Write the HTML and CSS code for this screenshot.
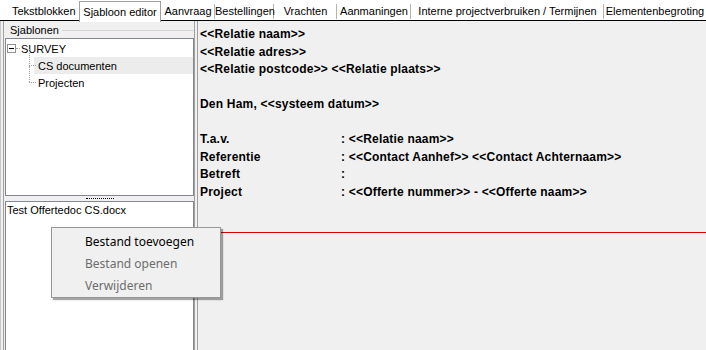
FILE: index.html
```html
<!DOCTYPE html>
<html lang="nl">
<head>
    <meta charset="UTF-8">
    <title>Sjabloon editor</title>
    <link rel="stylesheet" href="styles.css">
</head>
<body>
    <div class="tabs">
        <div class="tab tab-first">Tekstblokken</div>
        <div class="tab tab-active">Sjabloon editor</div>
        <div class="tab w54">Aanvraag</div>
        <div class="tab w59">Bestellingen</div>
        <div class="tab w63">Vrachten</div>
        <div class="tab w74">Aanmaningen</div>
        <div class="tab w193">Interne projectverbruiken / Termijnen</div>
        <div class="tab w102">Elementenbegroting</div>
    </div>

    <div class="main">
        <div class="left">
            <div class="group-title"><span>Sjablonen</span></div>
            <div class="tree">
                <div class="tree-row">
                    <span class="expander"></span>
                    <span class="dots-h short"></span>
                    <span class="tree-text">SURVEY</span>
                </div>
                <div class="tree-row child selected">
                    <span class="dots-v"></span>
                    <span class="dots-h"></span>
                    <span class="tree-text">CS documenten</span>
                </div>
                <div class="tree-row child last">
                    <span class="dots-v"></span>
                    <span class="dots-h"></span>
                    <span class="tree-text">Projecten</span>
                </div>
            </div>
            <div class="splitter"><span class="grip"></span></div>
            <div class="files">
                <div class="file-row">Test Offertedoc CS.docx</div>
            </div>
        </div>
        <div class="divider"></div>
        <div class="editor">
            <div class="line">&lt;&lt;Relatie naam&gt;&gt;</div>
            <div class="line">&lt;&lt;Relatie adres&gt;&gt;</div>
            <div class="line">&lt;&lt;Relatie postcode&gt;&gt; &lt;&lt;Relatie plaats&gt;&gt;</div>
            <div class="line"></div>
            <div class="line">Den Ham, &lt;&lt;systeem datum&gt;&gt;</div>
            <div class="line"></div>
            <div class="line field"><span class="key">T.a.v.</span><span>: &lt;&lt;Relatie naam&gt;&gt;</span></div>
            <div class="line field"><span class="key">Referentie</span><span>: &lt;&lt;Contact Aanhef&gt;&gt; &lt;&lt;Contact Achternaam&gt;&gt;</span></div>
            <div class="line field"><span class="key">Betreft</span><span>:</span></div>
            <div class="line field"><span class="key">Project</span><span>: &lt;&lt;Offerte nummer&gt;&gt; - &lt;&lt;Offerte naam&gt;&gt;</span></div>
            <div class="page-break"></div>
        </div>
    </div>

    <div class="context-menu">
        <div class="menu-item">Bestand toevoegen</div>
        <div class="menu-item disabled">Bestand openen</div>
        <div class="menu-item disabled">Verwijderen</div>
    </div>
</body>
</html>
```

FILE: styles.css
```css
body {
    margin: 0;
    width: 706px;
    height: 350px;
    overflow: hidden;
    background-color: #f0f0f0;
    font-family: "Liberation Sans", Arial, sans-serif;
    font-size: 11px;
    color: #000;
}
.tabs {
    display: flex;
    height: 20px;
    background-color: #fff;
    border-bottom: 1px solid #000;
}
.tab {
    height: 20px;
    line-height: 22px;
    text-align: center;
    white-space: nowrap;
    box-sizing: border-box;
    position: relative;
}
.tab-first {
    width: 79px;
    padding-left: 12px;
    text-align: left;
}
.tab-active {
    width: 82px;
    height: 21px;
    margin-top: 1px;
    line-height: 20px;
    border: 1px solid #a0a0a0;
    border-bottom: none;
    background-color: #fff;
    z-index: 1;
}
.w54 { width: 54px; }
.w59 { width: 59px; }
.w63 { width: 63px; }
.w74 { width: 74px; }
.w193 { width: 193px; }
.w102 { width: 102px; }
.tab.w54, .tab.w59, .tab.w63, .tab.w74, .tab.w193 {
    background-image: linear-gradient(#b4b4b4, #b4b4b4);
    background-size: 1px 15px;
    background-position: right 4px;
    background-repeat: no-repeat;
}
.main {
    display: flex;
    height: 329px;
}
.left {
    width: 194px;
    display: flex;
    flex-direction: column;
    border-left: 1px solid #c8c8c8;
    box-sizing: border-box;
    padding-left: 2px;
    box-shadow: inset 2px 0 0 #f0f0f0, inset 3px 0 0 #a0a0a0;
}
.group-title {
    height: 17px;
    padding-left: 7px;
    line-height: 20px;
    display: flex;
    align-items: center;
    gap: 3px;
}
.group-title::after {
    content: "";
    flex: 1;
    border-top: 1px solid #d5d5d5;
    margin-top: 2px;
}
.tree {
    height: 158px;
    margin-left: 2px;
    border: 1px solid #828790;
    box-sizing: border-box;
    background-color: #fff;
    padding-top: 1px;
}
.tree-row {
    height: 17px;
    display: flex;
    align-items: center;
    position: relative;
}
.tree-row.child {
    padding-left: 23px;
}
.tree-row.selected {
    background: linear-gradient(to right, #fff 28px, #ececec 28px);
}
.expander {
    width: 9px;
    height: 9px;
    margin-left: 1px;
    border: 1px solid #919191;
    box-sizing: border-box;
    position: relative;
}
.expander::after {
    content: "";
    position: absolute;
    left: 1px;
    right: 1px;
    top: 3px;
    border-top: 1px solid #000;
}
.dots-h {
    width: 7px;
    border-top: 1px dotted #a0a0a0;
    margin-right: 1px;
}
.dots-h.short {
    width: 4px;
}
.dots-v {
    position: absolute;
    left: 23px;
    top: -8px;
    height: 17px;
    border-left: 1px dotted #a0a0a0;
}
.tree-row.last .dots-v {
    height: 16px;
}
.tree-text {
    padding-left: 1px;
}
.tree-row:first-child .tree-text {
    padding-left: 0;
}
.splitter {
    height: 5px;
    display: flex;
    justify-content: center;
    align-items: center;
}
.grip {
    width: 28px;
    border-top: 1px dotted #000;
    margin-left: 2px;
}
.files {
    flex: 1;
    margin-left: 2px;
    border: 1px solid #828790;
    border-bottom: none;
    background-color: #fff;
    padding-top: 1px;
}
.file-row {
    height: 14px;
    line-height: 14px;
    padding-left: 1px;
}
.divider {
    width: 4px;
    border-left: 1px solid #a0a0a0;
    border-right: 1px solid #a0a0a0;
    box-sizing: border-box;
    background-color: #f0f0f0;
}
.editor {
    flex: 1;
    padding: 5px 0 0 2px;
    font-size: 12px;
    font-weight: bold;
    letter-spacing: 0.2px;
    background-color: #f0f0f0;
}
.line {
    height: 17.5px;
    line-height: 17.5px;
    white-space: nowrap;
}
.field {
    display: flex;
}
.key {
    width: 141px;
}
.page-break {
    margin: 31px 0 0 -2px;
    border-top: 1px solid #d80000;
}
.context-menu {
    position: absolute;
    left: 51px;
    top: 227px;
    width: 170px;
    height: 71px;
    box-sizing: border-box;
    padding: 3px 2px;
    background-color: #f0f0f0;
    border: 1px solid #979797;
    box-shadow: 2px 2px 1px rgba(0, 0, 0, 0.35);
    font-family: "Noto Sans", "Open Sans", sans-serif;
    font-size: 12px;
}
.menu-item {
    height: 22px;
    line-height: 22px;
    padding-left: 31px;
    white-space: nowrap;
}
.menu-item.disabled {
    color: #6d6d6d;
}
```
